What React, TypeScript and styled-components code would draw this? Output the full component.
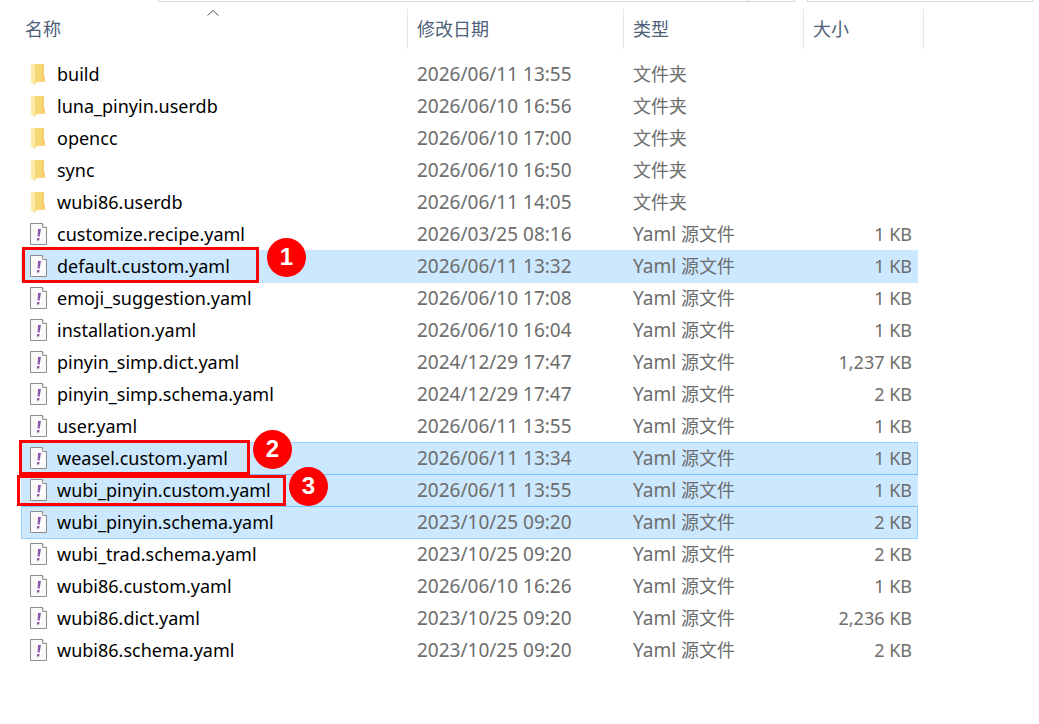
import React from "react";
import styled, { createGlobalStyle, css } from "styled-components";

const GlobalStyle = createGlobalStyle`
  *, *::before, *::after { box-sizing: border-box; }
  body {
    margin: 0;
    background: #fff;
    color: #000;
    font-family: "Noto Sans", "Noto Sans CJK SC", sans-serif;
    font-size: 18px;
  }
`;

const Toolbar = styled.div`
  display: flex;
  gap: 12px;
  height: 2px;
  padding: 0 6px 0 158px;
`;

const FieldEdge = styled.div`
  border: 1px solid #d9d9d9;
  border-top: 0;
`;

const AddressEdge = styled(FieldEdge)`
  display: flex;
  justify-content: flex-end;
  flex: 1;
`;

const RefreshEdge = styled.div`
  width: 46px;
  border-left: 1px solid #d9d9d9;
`;

const SearchEdge = styled(FieldEdge)`
  width: 226px;
`;

const Listing = styled.main`
  padding: 7px 115px 56px 21px;
`;

const FileTable = styled.table`
  width: 100%;
  table-layout: fixed;
  border-collapse: collapse;
`;

const Col = styled.col<{ $width?: number }>`
  ${(p) => p.$width && `width: ${p.$width}px;`}
`;

const HeadCell = styled.th`
  position: relative;
  height: 49px;
  padding: 0;
  font-weight: 400;
  vertical-align: top;
`;

const SortButton = styled.button<{ $indent?: number }>`
  display: block;
  width: 100%;
  height: 40px;
  padding: 0 0 0 ${(p) => p.$indent ?? 9}px;
  border: 0;
  border-right: 1px solid #e5e5e5;
  background: none;
  color: #4c607a;
  font: inherit;
  line-height: 40px;
  text-align: left;
`;

const SortArrow = styled.svg`
  position: absolute;
  top: 0;
  left: calc(50% - 9px);
`;

const Row = styled.tr`
  position: relative;
  height: 32px;
`;

const Cell = styled.td`
  height: 32px;
  padding: 0 0 0 9px;
  color: #6d6d6d;
  line-height: 32px;
  white-space: nowrap;
`;

/* The highlight spans the whole row, which is its positioned ancestor. */
const highlight = css`
  &::before {
    content: "";
    position: absolute;
    z-index: -1;
    inset: 0 6px -1px 0;
    background: #cce8ff;
  }
`;

const fullEdge = css`
  &::before {
    border: 1px solid #99d1ff;
  }
`;

const endsEdge = css`
  &::before {
    z-index: 0;
    border: 1px solid #7ac1ff;
    border-width: 1px 0;
  }
`;

const NameCell = styled(Cell)<{ $selected?: boolean; $edge?: "full" | "ends" }>`
  color: #000;
  ${(p) => p.$selected && highlight}
  ${(p) => p.$edge === "full" && fullEdge}
  ${(p) => p.$edge === "ends" && endsEdge}
`;

const SizeCell = styled(Cell)`
  padding: 0 12px 0 0;
  text-align: right;
`;

const Entry = styled.span`
  position: relative;
  z-index: 1;
  display: grid;
  grid-template-columns: 18px 1fr;
  align-items: center;
  column-gap: 9px;
`;

const Text = styled.span`
  position: relative;
  z-index: 1;
`;

const Latin = styled.span`
  font-size: 19px;
`;

const Icon = styled.svg`
  display: block;
`;

const Frame = styled.span<{ $x: number; $y: number; $w: number; $h: number }>`
  position: absolute;
  z-index: 2;
  left: ${(p) => p.$x}px;
  top: ${(p) => p.$y}px;
  width: ${(p) => p.$w}px;
  height: ${(p) => p.$h}px;
  border: 3px solid #f00;
`;

const Badge = styled.span<{ $x: number; $y: number }>`
  position: absolute;
  z-index: 3;
  left: ${(p) => p.$x}px;
  top: ${(p) => p.$y}px;
  width: 39px;
  height: 39px;
  border-radius: 50%;
  background: #f00;
  color: #fff;
  font: bold 24px/38px "Liberation Sans", Arial, sans-serif;
  text-align: center;
`;

function FolderIcon() {
  return (
    <Icon width="18" height="22" viewBox="0 0 18 22" aria-hidden="true">
      <path d="M4 1H14V13L15 14V19H4Z" fill="#f8d775" />
      <path d="M11 1H14V13L15 14V19H11Z" fill="#f5d06c" />
      <path d="M1 1H2L5 3.5Q6 4 6 5V20L5 22L1 19Z" fill="#ffe9a6" />
      <path d="M5.5 4V20L4.5 22" fill="none" stroke="#f0cb6b" strokeWidth="0.6" />
    </Icon>
  );
}

function YamlIcon() {
  return (
    <Icon width="18" height="22" viewBox="0 0 18 22" aria-hidden="true">
      <path d="M0.5 0.5H12.5L16.5 4.5V21.5H0.5Z" fill="#fafafa" stroke="#8c8c8c" />
      <path d="M12.5 0.5V4.5H16.5" fill="#fff" stroke="#8c8c8c" />
      <path d="M8 6H11L9.6 13.6H7.6Z" fill="#8b5bb0" />
      <path d="M7.2 15H9.6L9.2 17.5H6.8Z" fill="#8b5bb0" />
    </Icon>
  );
}

interface Mark {
  label: string;
  frame: [number, number, number, number];
  badge: [number, number];
}

interface Item {
  name: string;
  date: string;
  size?: string;
  selected?: boolean;
  edge?: "full" | "ends";
  mark?: Mark;
}

const items: Item[] = [
  { name: "build", date: "2026/06/11 13:55" },
  { name: "luna_pinyin.userdb", date: "2026/06/10 16:56" },
  { name: "opencc", date: "2026/06/10 17:00" },
  { name: "sync", date: "2026/06/10 16:50" },
  { name: "wubi86.userdb", date: "2026/06/11 14:05" },
  { name: "customize.recipe.yaml", date: "2026/03/25 08:16", size: "1 KB" },
  {
    name: "default.custom.yaml",
    date: "2026/06/11 13:32",
    size: "1 KB",
    selected: true,
    mark: { label: "1", frame: [1, -3, 237, 36], badge: [246, -12] },
  },
  { name: "emoji_suggestion.yaml", date: "2026/06/10 17:08", size: "1 KB" },
  { name: "installation.yaml", date: "2026/06/10 16:04", size: "1 KB" },
  { name: "pinyin_simp.dict.yaml", date: "2024/12/29 17:47", size: "1,237 KB" },
  { name: "pinyin_simp.schema.yaml", date: "2024/12/29 17:47", size: "2 KB" },
  { name: "user.yaml", date: "2026/06/11 13:55", size: "1 KB" },
  {
    name: "weasel.custom.yaml",
    date: "2026/06/11 13:34",
    size: "1 KB",
    selected: true,
    edge: "full",
    mark: { label: "2", frame: [-2, -2, 231, 35], badge: [232, -12] },
  },
  {
    name: "wubi_pinyin.custom.yaml",
    date: "2026/06/11 13:55",
    size: "1 KB",
    selected: true,
    edge: "ends",
    mark: { label: "3", frame: [-4, 1, 269, 31], badge: [268, -7] },
  },
  { name: "wubi_pinyin.schema.yaml", date: "2023/10/25 09:20", size: "2 KB", selected: true, edge: "full" },
  { name: "wubi_trad.schema.yaml", date: "2023/10/25 09:20", size: "2 KB" },
  { name: "wubi86.custom.yaml", date: "2026/06/10 16:26", size: "1 KB" },
  { name: "wubi86.dict.yaml", date: "2023/10/25 09:20", size: "2,236 KB" },
  { name: "wubi86.schema.yaml", date: "2023/10/25 09:20", size: "2 KB" },
];

function FileRow({ item }: { item: Item }) {
  const { mark } = item;
  return (
    <Row>
      <NameCell $selected={item.selected} $edge={item.edge}>
        <Entry>
          {item.size ? <YamlIcon /> : <FolderIcon />}
          <span>{item.name}</span>
        </Entry>
        {mark && (
          <>
            <Frame $x={mark.frame[0]} $y={mark.frame[1]} $w={mark.frame[2]} $h={mark.frame[3]} />
            <Badge $x={mark.badge[0]} $y={mark.badge[1]}>
              {mark.label}
            </Badge>
          </>
        )}
      </NameCell>
      <Cell>
        <Text>
          <Latin>{item.date}</Latin>
        </Text>
      </Cell>
      <Cell>
        <Text>
          {item.size ? (
            <>
              <Latin>Yaml </Latin>源文件
            </>
          ) : (
            "文件夹"
          )}
        </Text>
      </Cell>
      <SizeCell>
        <Text>{item.size}</Text>
      </SizeCell>
    </Row>
  );
}

export default function App() {
  return (
    <>
      <GlobalStyle />
      <Toolbar>
        <AddressEdge>
          <RefreshEdge />
        </AddressEdge>
        <SearchEdge />
      </Toolbar>
      <Listing>
        <FileTable>
          <colgroup>
            <Col />
            <Col $width={216} />
            <Col $width={180} />
            <Col $width={120} />
          </colgroup>
          <thead>
            <tr>
              <HeadCell aria-sort="ascending">
                <SortArrow width="14" height="8" viewBox="0 0 14 8" aria-hidden="true">
                  <path d="M1.5 6.5L7 1.5L12.5 6.5" fill="none" stroke="#5a5a5a" />
                </SortArrow>
                <SortButton type="button" $indent={4}>
                  名称
                </SortButton>
              </HeadCell>
              <HeadCell>
                <SortButton type="button">修改日期</SortButton>
              </HeadCell>
              <HeadCell>
                <SortButton type="button">类型</SortButton>
              </HeadCell>
              <HeadCell>
                <SortButton type="button">大小</SortButton>
              </HeadCell>
            </tr>
          </thead>
          <tbody>
            {items.map((item) => (
              <FileRow key={item.name} item={item} />
            ))}
          </tbody>
        </FileTable>
      </Listing>
    </>
  );
}
